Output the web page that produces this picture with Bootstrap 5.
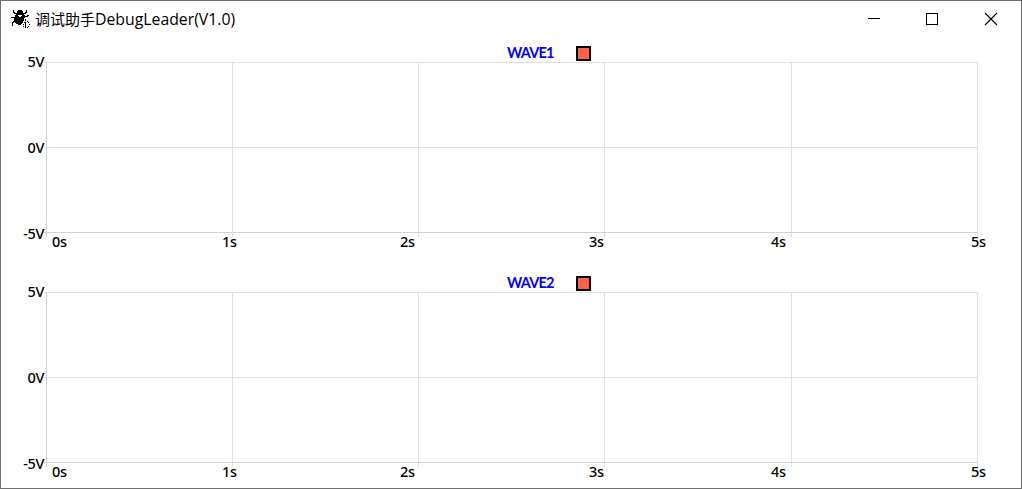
<!DOCTYPE html>
<html lang="zh">
<head>
    <meta charset="UTF-8">
    <meta name="viewport" content="width=device-width, initial-scale=1.0">
    <title>调试助手DebugLeader(V1.0)</title>
    <link href="https://cdn.jsdelivr.net/npm/bootstrap@5.3.0/dist/css/bootstrap.min.css" rel="stylesheet">
    <style>
        body { font-family: "Open Sans", "Noto Sans CJK SC", sans-serif; color: #000; }
        .app-window { height: 489px; border: 1px solid #6f6f6f; }
        .title-bar { height: 37px; padding-left: 9px; }
        .app-title {
            font-size: 15px;
            line-height: 36px;
            margin-left: 5px;
        }
        .app-name { font-size: 15.8px; }
        .win-btn { width: 58px; height: 36px; }
        .wave-panel { height: 230px; }
        .wave-legend { height: 24px; padding-left: 505px; }
        .wave-name {
            width: 70px;
            color: #00f;
            font: 700 14.5px/29px "Lato", sans-serif;
            letter-spacing: -.8px;
            padding-left: 1px;
        }
        .wave-swatch {
            width: 15px;
            height: 15px;
            margin-top: 8px;
            background: #ff6347;
            border: 2px solid #000;
        }
        .y-axis { width: 43px; height: 192px; margin-top: -11px; line-height: 20px; }
        .axis-text {
            font-family: "Noto Sans", sans-serif;
            font-size: 14.5px;
            font-weight: 500;
            letter-spacing: -.4px;
        }
        .plot-area { height: 170px; }
        .x-axis {
            display: grid;
            grid-template-columns: 170px 178px 189px 182px 200px 40px;
            padding-left: 51px;
            line-height: 19px;
        }
    </style>
</head>
<body class="overflow-hidden">
    <div class="app-window bg-white">
        <div class="title-bar d-flex align-items-start">
            <svg width="20" height="20" class="mt-2" viewBox="0 0 20 20" shape-rendering="crispEdges">
                <rect width="20" height="20" fill="#f6f6f6"/>
                <path d="M8 1h4v1h1v2h1v2h1v3h-1v3h-1v2h-1v1h-1v1H8v-1H6v-1H5v-2H4V9h1V6h1V4h1V2h1z"/>
                <path d="M3 1v2h1v1h2v1M16 1v2h-1v1h-2M1 8.500h4M14 7.500h3v-1h2M5 12.500H3v1H2v3" fill="none" stroke="#000"/>
                <path d="M8 6.500h4M9 7.500h2" stroke="#fff"/>
                <path d="M15.500 10v2M15.500 13v6M14 13.500h1M17 12.500h1M18 13.500h1M13 15.500h1M19 15.500h1M18 17.500h1M13 17.500h1M17 18.500h1" stroke="#000"/>
            </svg>
            <div class="app-title">调试助手<span class="app-name">DebugLeader(V1.0)</span></div>
            <div class="d-flex ms-auto">
                <svg class="win-btn" viewBox="0 0 58 36"><path d="M21 17.500h12" stroke="#000"/></svg>
                <svg class="win-btn" viewBox="0 0 58 36"><rect x="21.500" y="12.500" width="11" height="11" fill="none" stroke="#000"/></svg>
                <svg class="win-btn" viewBox="0 0 58 36"><path d="M22 12l12 12M34 12L22 24" stroke="#000" stroke-width="1.100"/></svg>
            </div>
        </div>

        <div class="wave-panel">
            <div class="wave-legend d-flex">
                <div class="wave-name">WAVE1</div>
                <div class="wave-swatch"></div>
            </div>
            <div class="plot-area d-flex">
                <div class="y-axis axis-text d-flex flex-column justify-content-between text-end">
                    <span>5V</span><span>0V</span><span>-5V</span>
                </div>
                <svg width="935" height="177" fill="none" shape-rendering="crispEdges">
                    <path d="M188.500 0v175M374.500 0v175M560.500 0v175M747.500 0v175M933.500 0v175M0 .5h934M0 85.500h934" stroke="#dfdfdf"/>
                    <path d="M2.500 0v175M0 170.500h934" stroke="#d3d3d3"/>
                </svg>
            </div>
            <div class="x-axis axis-text">
                <span>0s</span><span>1s</span><span>2s</span><span>3s</span><span>4s</span><span>5s</span>
            </div>
        </div>

        <div class="wave-panel">
            <div class="wave-legend d-flex">
                <div class="wave-name">WAVE2</div>
                <div class="wave-swatch"></div>
            </div>
            <div class="plot-area d-flex">
                <div class="y-axis axis-text d-flex flex-column justify-content-between text-end">
                    <span>5V</span><span>0V</span><span>-5V</span>
                </div>
                <svg width="935" height="177" fill="none" shape-rendering="crispEdges">
                    <path d="M188.500 0v175M374.500 0v175M560.500 0v175M747.500 0v175M933.500 0v175M0 .5h934M0 85.500h934" stroke="#dfdfdf"/>
                    <path d="M2.500 0v175M0 170.500h934" stroke="#d3d3d3"/>
                </svg>
            </div>
            <div class="x-axis axis-text">
                <span>0s</span><span>1s</span><span>2s</span><span>3s</span><span>4s</span><span>5s</span>
            </div>
        </div>
    </div>

    <script src="https://cdn.jsdelivr.net/npm/bootstrap@5.3.0/dist/js/bootstrap.bundle.min.js"></script>
</body>
</html>
